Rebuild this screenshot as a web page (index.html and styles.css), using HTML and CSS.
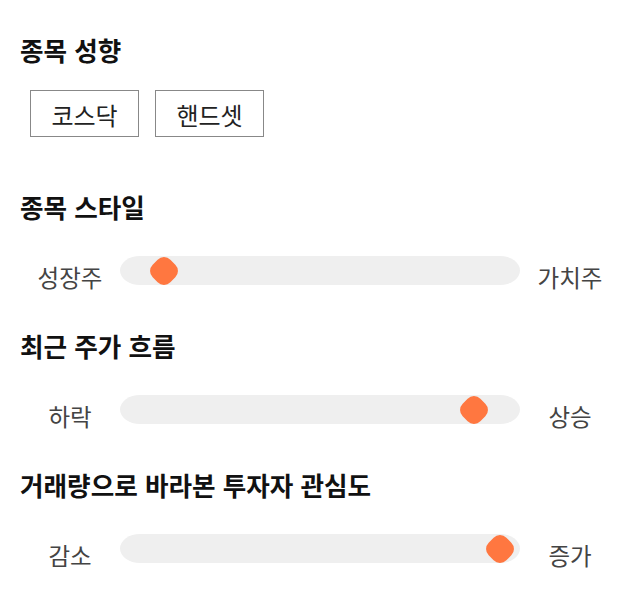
FILE: index.html
```html
<!DOCTYPE html>
<html lang="ko">
<head>
    <meta charset="UTF-8">
    <meta name="viewport" content="width=device-width, initial-scale=1.0">
    <title>종목 성향</title>
    <link rel="stylesheet" href="styles.css">
</head>
<body>
    <div class="container">
        <div class="section">
            <h2>종목 성향</h2>
            <div class="chips">
                <span class="chip">코스닥</span>
                <span class="chip">핸드셋</span>
            </div>
        </div>

        <div class="section">
            <h2>종목 스타일</h2>
            <div class="slider-row">
                <span class="side">성장주</span>
                <div class="track"><span class="thumb" style="left: 11.1%;"></span></div>
                <span class="side">가치주</span>
            </div>
        </div>

        <div class="section">
            <h2>최근 주가 흐름</h2>
            <div class="slider-row">
                <span class="side">하락</span>
                <div class="track"><span class="thumb" style="left: 88.6%;"></span></div>
                <span class="side">상승</span>
            </div>
        </div>

        <div class="section">
            <h2>거래량으로 바라본 투자자 관심도</h2>
            <div class="slider-row">
                <span class="side">감소</span>
                <div class="track"><span class="thumb" style="left: 94.9%;"></span></div>
                <span class="side">증가</span>
            </div>
        </div>
    </div>
</body>
</html>
```

FILE: styles.css
```css
body {
    font-family: "Noto Sans CJK KR", "Noto Sans", sans-serif;
    background-color: #fff;
    margin: 0;
    color: #222;
}
.container {
    padding: 35px 20px 20px 20px;
}
h2 {
    font-size: 25.6px;
    line-height: 30px;
    font-weight: bold;
    color: #111;
    margin: 0;
}
.section + .section {
    margin-top: 39px;
}
.section:nth-child(2) {
    margin-top: 55px;
}
.chips {
    display: flex;
    gap: 16px;
    margin: 25px 0 0 10px;
}
.chip {
    box-sizing: border-box;
    width: 109px;
    height: 47px;
    border: 1px solid #888;
    display: flex;
    align-items: center;
    justify-content: center;
    font-size: 24px;
    padding-top: 2px;
    color: #222;
}
.slider-row {
    display: grid;
    grid-template-columns: 100px 400px 100px;
    align-items: start;
    margin-top: 34px;
}
.side {
    text-align: center;
    font-size: 23.5px;
    line-height: 30px;
    color: #444;
    margin-top: 6px;
}
.track {
    position: relative;
    height: 29px;
    background-color: #efefef;
    border-radius: 20px / 14.5px;
}
.thumb {
    position: absolute;
    top: 50%;
    width: 25px;
    height: 25px;
    background-color: #ff7740;
    border-radius: 9px;
    transform: translate(-50%, -50%) rotate(45deg);
}
```
